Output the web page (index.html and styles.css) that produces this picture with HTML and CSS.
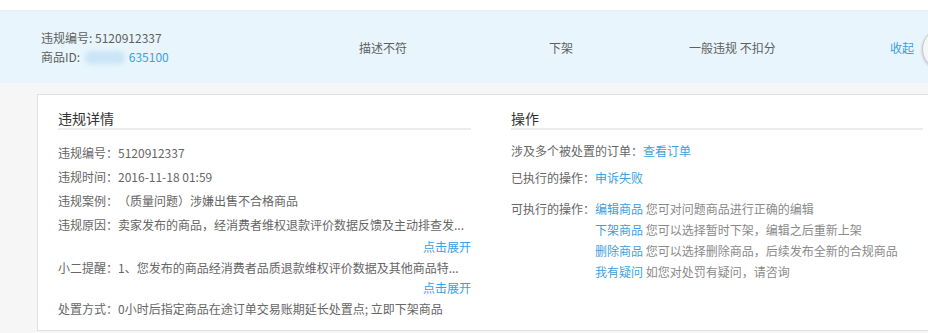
FILE: index.html
```html
<!DOCTYPE html>
<html lang="zh-CN">
<head>
<meta charset="utf-8">
<title>违规详情</title>
<link rel="stylesheet" href="styles.css">
</head>
<body>
<div class="page">
  <div class="band">
    <div class="band-id">
      <div>违规编号: 5120912337</div>
      <div>商品ID: <span class="blur"></span><a class="link">635100</a></div>
    </div>
    <div>描述不符</div>
    <div>下架</div>
    <div>一般违规 不扣分</div>
    <div><a class="link">收起</a></div>
    <span class="round-btn"></span>
  </div>

  <div class="card">
    <div class="col col-left">
      <div class="col-title">违规详情</div>
      <div class="rows">
        <div class="row">违规编号：5120912337</div>
        <div class="row">违规时间：2016-11-18 01:59</div>
        <div class="row">违规案例：（质量问题）涉嫌出售不合格商品</div>
        <div class="row">违规原因：卖家发布的商品，经消费者维权退款评价数据反馈及主动排查发...</div>
        <div class="expand"><a class="link">点击展开</a></div>
        <div class="row row-s">小二提醒：1、您发布的商品经消费者品质退款维权评价数据及其他商品特...</div>
        <div class="expand"><a class="link">点击展开</a></div>
        <div class="row row-s">处置方式：0小时后指定商品在途订单交易账期延长处置点; 立即下架商品</div>
      </div>
    </div>
    <div class="col col-right">
      <div class="col-title">操作</div>
      <div class="ops">
        <div class="op op1">涉及多个被处置的订单：<a class="link">查看订单</a></div>
        <div class="op op2">已执行的操作：<a class="link">申诉失败</a></div>
        <div class="op op3">
          <div class="op-label">可执行的操作：</div>
          <div class="op-list">
            <div class="op-item op-first"><a class="link">编辑商品</a> 您可对问题商品进行正确的编辑</div>
            <div class="op-item"><a class="link">下架商品</a> 您可以选择暂时下架，编辑之后重新上架</div>
            <div class="op-item"><a class="link">删除商品</a> 您可以选择删除商品，后续发布全新的合规商品</div>
            <div class="op-item"><a class="link">我有疑问</a> 如您对处罚有疑问，请咨询</div>
          </div>
        </div>
      </div>
    </div>
  </div>
</div>
</body>
</html>
```

FILE: styles.css
```css
html, body {
  margin: 0;
  padding: 0;
  overflow: hidden;
  background: #ffffff;
}
body {
  font-family: "Noto Sans CJK SC", "Noto Sans", "Liberation Sans", sans-serif;
  font-size: 12px;
  color: #666666;
  text-spacing-trim: space-all;
}
.page {
  width: 928px;
  height: 333px;
  box-sizing: border-box;
  background: #f6f6f6;
  border-top: 10px solid #ffffff;
  overflow: hidden;
}
.link {
  color: #3d9fe1;
  text-decoration: none;
  cursor: pointer;
}
.band {
  position: relative;
  overflow: hidden;
  height: 73px;
  box-sizing: border-box;
  background: #e8f5fc;
  border-top: 1px solid #e3eef5;
  padding-left: 41px;
  display: grid;
  grid-template-columns: 318px 190px 140px 201px 1fr;
  align-items: center;
  color: #5f5f5f;
}
.band-id {
  line-height: 19px;
  margin-top: -1px;
}
.blur {
  display: inline-block;
  width: 40px;
  height: 13px;
  margin: 0 4px 0 2px;
  vertical-align: -2px;
  background: #cbe5f7;
  border-radius: 6px;
  filter: blur(2px);
}
.round-btn {
  position: absolute;
  left: 922px;
  top: 17px;
  width: 40px;
  height: 40px;
  border-radius: 50%;
  border: 1px solid #c9c9c9;
  background: #f4f6f7;
  box-shadow: 0 1px 3px rgba(0,0,0,0.2);
}
.card {
  margin-top: 11px;
  margin-left: 37px;
  width: 891px;
  box-sizing: border-box;
  background: #ffffff;
  border: 1px solid #e1e1e1;
  border-right: none;
  padding: 0 0 11px 20px;
  display: flex;
  gap: 40px;
}
.col-left {
  width: 413px;
}
.col-right {
  width: 412px;
}
.col-title {
  padding-top: 13px;
  line-height: 20px;
  font-size: 14px;
  color: #333333;
  border-bottom: 2px solid #ececec;
}
.rows {
  margin-top: 11px;
}
.row {
  line-height: 24px;
  white-space: nowrap;
}
.row-s {
  line-height: 21px;
}
.expand {
  line-height: 20px;
  text-align: right;
}
.ops {
  margin-top: 11px;
}
.op {
  line-height: 20px;
  white-space: nowrap;
}
.op2 {
  margin-top: 7px;
}
.op3 {
  margin-top: 11px;
  display: flex;
}
.op-label {
  line-height: 20px;
}
.op-item {
  line-height: 21px;
  color: #8a8a8a;
}
.op-first {
  line-height: 20px;
}
```
